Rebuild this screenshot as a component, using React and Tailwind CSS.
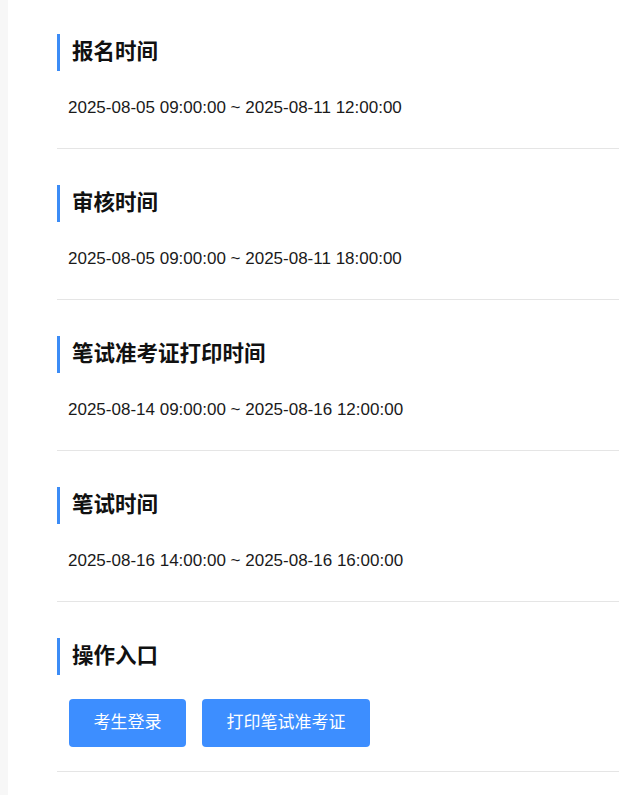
const sections = [
  { title: "报名时间", time: "2025-08-05 09:00:00 ~ 2025-08-11 12:00:00" },
  { title: "审核时间", time: "2025-08-05 09:00:00 ~ 2025-08-11 18:00:00" },
  { title: "笔试准考证打印时间", time: "2025-08-14 09:00:00 ~ 2025-08-16 12:00:00" },
  { title: "笔试时间", time: "2025-08-16 14:00:00 ~ 2025-08-16 16:00:00" },
];

const SectionTitle = ({ children }) => (
  <h2 className="border-l-[3px] border-[#3c8cf6] pl-3 text-[21.5px] font-bold leading-[37px] text-[#111]">
    {children}
  </h2>
);

export default function App() {
  return (
    <div
      className="flex min-h-screen bg-white"
      style={{ fontFamily: '"Liberation Sans", "Noto Sans CJK SC", sans-serif' }}
    >
      <div className="w-2 shrink-0 bg-[#f7f7f7]" />
      <div className="flex-1 pl-[49px]">
        {sections.map((s, i) => (
          <section
            key={s.title}
            className={`border-b border-[#e5e5e5] pb-7 ${i === 0 ? "pt-[34px]" : "pt-9"}`}
          >
            <SectionTitle>{s.title}</SectionTitle>
            <p className="mt-[25px] pl-[11px] text-[17px] leading-6 text-[#1a1a1a]">{s.time}</p>
          </section>
        ))}
        <section className="border-b border-[#e5e5e5] pt-9 pb-6">
          <SectionTitle>操作入口</SectionTitle>
          <div className="mt-6 flex gap-4 pl-3">
            <button className="h-12 w-[117px] rounded bg-[#3d8eff] text-[17px] text-white">
              考生登录
            </button>
            <button className="h-12 w-[168px] rounded bg-[#3d8eff] text-[17px] text-white">
              打印笔试准考证
            </button>
          </div>
        </section>
      </div>
    </div>
  );
}
